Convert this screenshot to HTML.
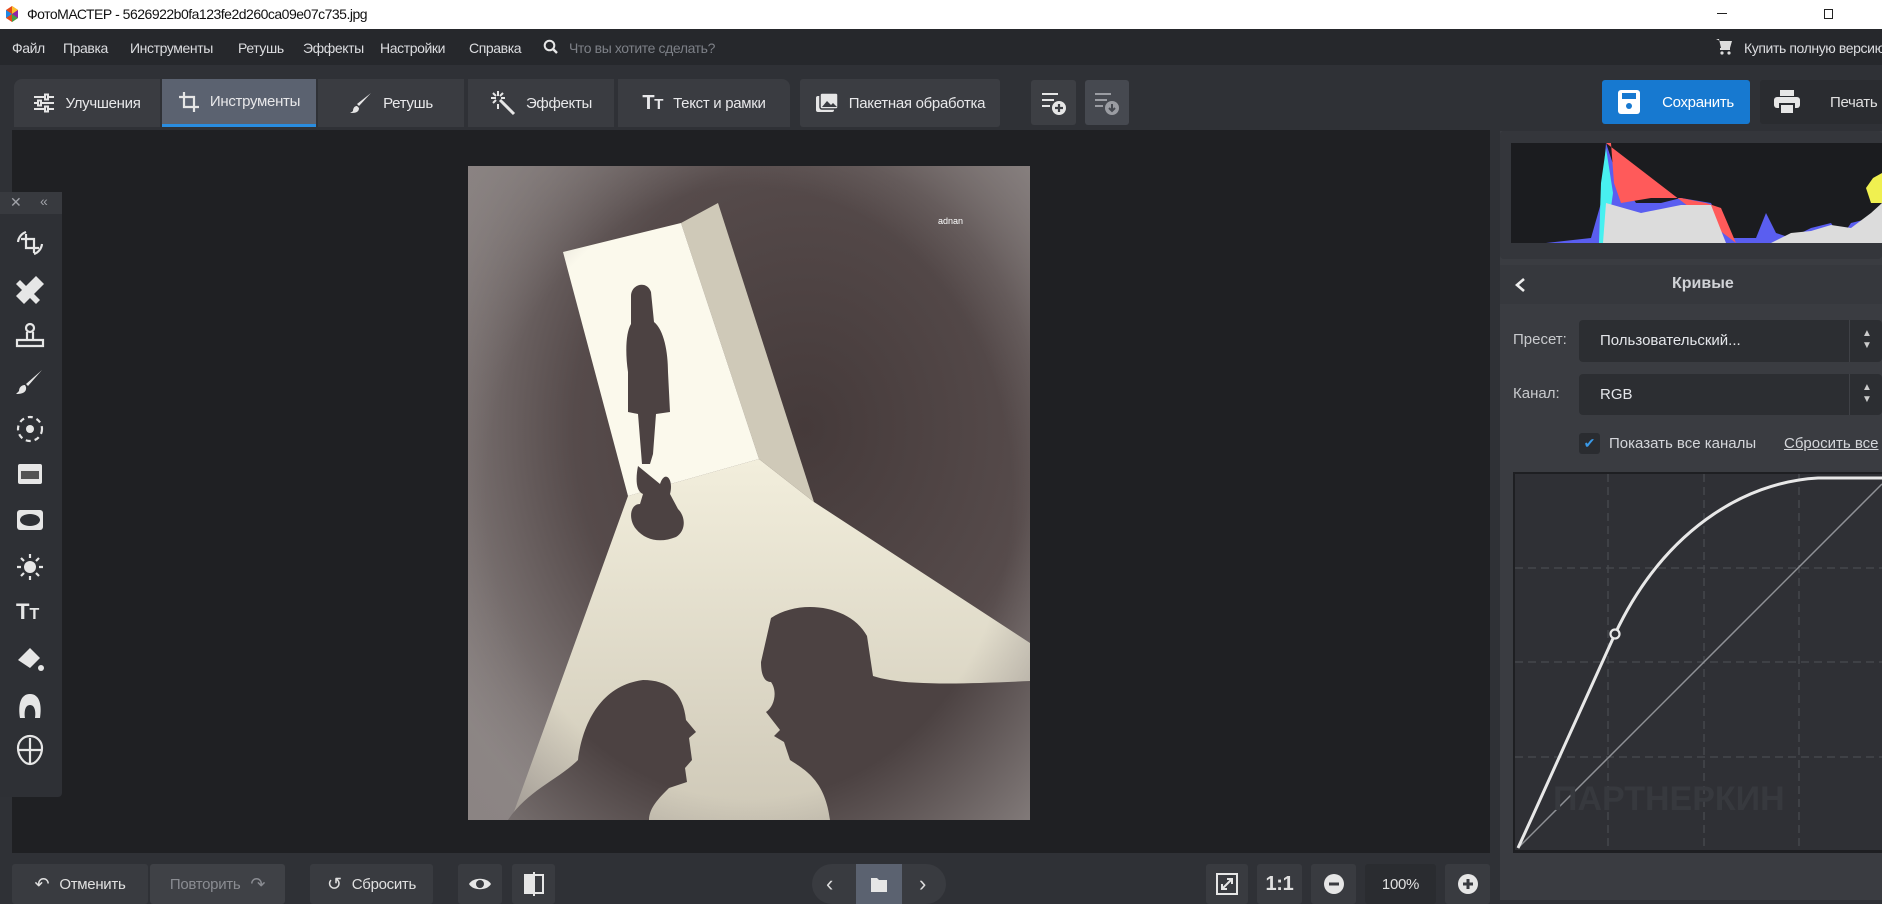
<!DOCTYPE html>
<html><head><meta charset="utf-8">
<style>
*{margin:0;padding:0;box-sizing:border-box;white-space:nowrap}
body{width:1882px;height:900px;overflow:hidden;background:#2f3136;font-family:"Liberation Sans","Noto Sans CJK SC",sans-serif;color:#e4e6ea;position:relative}
.a{position:absolute}
.title{left:0;top:0;width:1882px;height:29px;background:#fff;color:#111;font-size:14px}
.menu{left:0;top:29px;width:1882px;height:36px;background:#26282c;font-size:14px;color:#dcdde0;letter-spacing:-0.4px}
.menu span{position:absolute;top:11px}
.tab{position:absolute;top:79px;height:48px;background:#3a3c41;font-size:15px;color:#e8e8ea;display:flex;align-items:center;justify-content:center;gap:10px;letter-spacing:-0.3px}
.btn{position:absolute;background:#393b40;border-radius:3px;display:flex;align-items:center;justify-content:center;font-size:15px;color:#e0e0e0;gap:10px;letter-spacing:-0.3px}
</style></head><body>
<div class="a title">
 <svg class="a" style="left:4px;top:6px" width="16" height="16" viewBox="0 0 16 16"><path d="M8 0 L14 4 L14 12 L8 16 L2 12 L2 4Z" fill="#e64a19"/><path d="M8 0 L14 4 L8 8Z" fill="#fbc02d"/><path d="M14 12 L8 16 L8 8Z" fill="#43a047"/><path d="M2 12 L2 4 L8 8Z" fill="#1e88e5"/><path d="M14 4 L14 12 L8 8Z" fill="#8e24aa"/></svg>
 <span class="a" style="left:27px;top:6px;letter-spacing:-0.5px">ФотоМАСТЕР - 5626922b0fa123fe2d260ca09e07c735.jpg</span>
 <span class="a" style="left:1717px;top:13px;width:10px;height:1px;background:#222"></span>
 <span class="a" style="left:1824px;top:9px;width:9px;height:10px;border:1px solid #222"></span>
</div>
<div class="a menu">
 <span style="left:12px">Файл</span><span style="left:63px">Правка</span><span style="left:130px">Инструменты</span><span style="left:238px">Ретушь</span><span style="left:303px">Эффекты</span><span style="left:380px">Настройки</span><span style="left:469px">Справка</span>
 <svg class="a" style="left:543px;top:10px" width="16" height="16" viewBox="0 0 16 16"><circle cx="6.5" cy="6.5" r="4.8" stroke="#e6e6e6" stroke-width="2" fill="none"/><path d="M10 10 L14 14" stroke="#e6e6e6" stroke-width="2.4"/></svg>
 <span style="left:569px;color:#7d8087">Что вы хотите сделать?</span>
 <svg class="a" style="left:1714px;top:7px" width="20" height="20" viewBox="0 0 20 20"><path d="M2 3h3l2 9h9l2-7H6" fill="#ddd"/><rect x="6" y="12" width="10" height="2" fill="#ddd"/><circle cx="8" cy="17" r="1.6" fill="#ddd"/><circle cx="15" cy="17" r="1.6" fill="#ddd"/></svg>
 <span style="left:1744px">Купить полную версию</span>
</div>
<div class="tab" style="left:14px;width:146px;border-radius:8px 0 0 0"><svg width="22" height="20" viewBox="0 0 22 20"><g stroke="#e6e6e6" stroke-width="2"><path d="M1 4h20M1 10h20M1 16h20"/></g><g fill="#3a3c41" stroke="#e6e6e6" stroke-width="2"><rect x="12" y="1.5" width="3" height="5"/><rect x="5" y="7.5" width="3" height="5"/><rect x="12" y="13.5" width="3" height="5"/></g></svg>Улучшения</div>
<div class="tab" style="left:162px;width:154px;background:#5b6270;border-bottom:3px solid #2a8de0"><svg width="22" height="22" viewBox="0 0 22 22"><path d="M6 1v15h15M1 6h15v15" stroke="#e6e6e6" stroke-width="2.2" fill="none"/></svg>Инструменты</div>
<div class="tab" style="left:318px;width:146px"><svg width="24" height="24" viewBox="0 0 24 24"><path d="M22 2 L10 15 L8 13Z" fill="#e6e6e6"/><path d="M8 15c-3 0-4 3-4 5-1 1-3 2-3 2 4 0 9 0 9-5Z" fill="#e6e6e6"/></svg>Ретушь</div>
<div class="tab" style="left:468px;width:146px"><svg width="26" height="26" viewBox="0 0 26 26"><path d="M10 10 L24 24" stroke="#e6e6e6" stroke-width="3"/><g stroke="#e6e6e6" stroke-width="2"><path d="M8 1v5M8 14v5M1 8h5M11 8h4M3 3l3 3M13 3l-3 3M3 13l3-3"/></g></svg>Эффекты</div>
<div class="tab" style="left:618px;width:172px;border-radius:0 8px 0 0"><span style="font-weight:bold;font-size:20px">T<span style="font-size:15px">T</span></span>Текст и рамки</div>
<div class="tab" style="left:800px;width:200px;border-radius:3px;background:#3b3d42"><svg width="24" height="22" viewBox="0 0 24 22"><rect x="1" y="4" width="18" height="16" rx="2" fill="#e6e6e6"/><rect x="5" y="1" width="18" height="16" rx="2" fill="#e6e6e6" stroke="#3b3d42" stroke-width="1.5"/><path d="M7 15l5-6 4 4 2-2 4 4Z" fill="#3b3d42"/></svg>Пакетная обработка</div>
<div class="btn" style="left:1031px;top:80px;width:45px;height:45px;background:#3d3f44"><svg width="28" height="28" viewBox="0 0 28 28"><g stroke="#e6e6e6" stroke-width="2"><path d="M2 5h16M2 11h12M2 17h8"/></g><circle cx="19" cy="19" r="7" fill="#e6e6e6"/><path d="M19 15v8M15 19h8" stroke="#3d3f44" stroke-width="2.2"/></svg></div>
<div class="btn" style="left:1085px;top:80px;width:44px;height:45px;background:#464950"><svg width="28" height="28" viewBox="0 0 28 28"><g stroke="#9a9ca2" stroke-width="2"><path d="M2 5h16M2 11h12M2 17h8"/></g><circle cx="19" cy="19" r="7" fill="#9a9ca2"/><path d="M19 15v7M16 19l3 3 3-3" stroke="#464950" stroke-width="2" fill="none"/></svg></div>
<div class="btn" style="left:1602px;top:80px;width:148px;height:44px;background:#1779d0;color:#fff;gap:22px"><svg width="22" height="24" viewBox="0 0 22 24"><rect x="0" y="0" width="22" height="24" rx="3" fill="#fff"/><rect x="4" y="3" width="14" height="6" fill="#1779d0"/><circle cx="11" cy="16" r="3" fill="#1779d0"/></svg>Сохранить</div>
<div class="btn" style="left:1760px;top:80px;width:130px;height:44px;background:#2a2c30;gap:30px;justify-content:flex-start;padding-left:14px"><svg width="26" height="24" viewBox="0 0 26 24"><rect x="6" y="0" width="14" height="6" fill="#e6e6e6"/><rect x="0" y="7" width="26" height="11" rx="3" fill="#e6e6e6"/><rect x="6" y="14" width="14" height="10" fill="#e6e6e6" stroke="#2a2c30" stroke-width="2"/></svg>Печать</div>
<div class="a" style="left:12px;top:130px;width:1478px;height:723px;background:#1f2023"></div>
<svg class="a" style="left:468px;top:166px" width="562" height="654" viewBox="0 0 562 654">
 <defs>
  <radialGradient id="wall" cx="0.6" cy="0.4" r="0.75"><stop offset="0" stop-color="#453a3a"/><stop offset="0.55" stop-color="#564b4b"/><stop offset="1" stop-color="#8f8887"/></radialGradient>
  <linearGradient id="floor" x1="0" y1="0" x2="0" y2="1"><stop offset="0" stop-color="#f2eedc"/><stop offset="1" stop-color="#cfc9b8"/></linearGradient>
  <radialGradient id="vig" cx="0.5" cy="0.5" r="0.72"><stop offset="0.65" stop-color="#8a8382" stop-opacity="0"/><stop offset="1" stop-color="#8a8382" stop-opacity="0.9"/></radialGradient>
 </defs>
 <rect width="562" height="654" fill="url(#wall)"/>
 <path d="M160 330 L291 293 L346 336 L562 477 L562 654 L43 654Z" fill="url(#floor)"/>
 <path d="M213 57 L250 37 L346 336 L291 293Z" fill="#cfc9b8"/>
 <path d="M95 86 L213 57 L291 293 L160 330Z" fill="#fbf9ec"/>
 <g fill="#4c4242">
  <path d="M163 130 c0-12 16-16 20-4 l3 30 c10 8 14 30 14 50 l2 40 -14 2 -3 40 -3 10 -8 0 -4-50 -10-2 0-40 c-3-20 -2-40 3-48Z"/>
  <path d="M170 300 c-2 10 -3 25 5 28 l-3 10 c-10 0 -12 15 -4 25 c10 12 25 14 40 8 c10-6 10-20 2-28 l-8 -15 c4-15 -5-25 -10-10 Z"/>
  <path d="M40 654 c20-30 50-40 70-60 c5-40 25-75 65-80 c25 0 40 12 43 40 l10 12 -7 6 3 22 -7 8 2 14 -18 6 c-10 10 -20 20 -20 32Z"/>
  <path d="M303 452 c30-20 80-12 96 18 l6 40 c30 10 90 8 157 5 l0 139 -200 0 c-5-40 -25-50 -40-60 l-6-18 -10-6 6-6 -14-18 c8-5 12-20 5-30 -8 0 -10-10 -10-20Z"/>
 </g>
 <rect width="562" height="654" fill="url(#vig)"/>
 <text x="470" y="58" font-size="9" fill="#fff" font-family="Liberation Sans">adnan</text>
</svg>
<div class="a" style="left:0;top:192px;width:62px;height:605px;background:#2e3035;border-radius:0 4px 4px 0"></div>
<div class="a" style="left:0;top:192px;width:62px;height:22px;background:#383a3f;color:#a0a2a8;font-size:14px"><span class="a" style="left:10px;top:2px">✕</span><span class="a" style="left:40px;top:1px">«</span></div>
<svg class="a" style="left:14px;top:230px" width="34" height="550" viewBox="0 0 34 550" fill="#e6e6e6" stroke="#e6e6e6">
 <g fill="none" stroke-width="2.2"><path d="M12 4v14h13M7 9h13v14"/><path d="M4 12a12 12 0 0 1 8-10M28 14a12 12 0 0 1-8 10"/></g>
 <g transform="translate(0,46)" stroke="none"><path d="M6 4 L26 24 L22 28 L2 8Z"/><path d="M22 0 L30 8 L10 28 L2 20Z"/></g>
 <g transform="translate(0,92)" fill="none" stroke-width="2.2"><circle cx="16" cy="6" r="4"/><path d="M13 10v8M19 10v8M3 18h26v6H3Z"/></g>
 <g transform="translate(0,138)" stroke="none"><path d="M28 2 L14 18 L12 16Z"/><path d="M11 17c-4 0-6 3-6 6-2 2-3 3-3 3 5 0 11-1 10-7Z"/></g>
 <g transform="translate(0,184)" fill="none" stroke-width="2.2" stroke-dasharray="5 4"><circle cx="16" cy="15" r="12"/></g><circle cx="16" cy="199" r="4" stroke="none"/>
 <g transform="translate(0,230)"><rect x="4" y="4" width="24" height="20" rx="2" stroke="none"/><rect x="7" y="11" width="18" height="8" fill="#555" stroke="none"/></g>
 <g transform="translate(0,276)"><rect x="3" y="4" width="26" height="20" rx="3" stroke="none"/><ellipse cx="16" cy="14" rx="10" ry="6" fill="#2e3035" stroke="none"/></g>
 <g transform="translate(0,322)" stroke-width="2.2"><circle cx="16" cy="15" r="6" stroke="none"/><path d="M16 2v4M16 24v4M3 15h4M25 15h4M7 6l3 3M25 6l-3 3M7 24l3-3M25 24l-3-3"/></g>
 <text x="2" y="389" font-size="22" font-weight="bold" stroke="none" font-family="Liberation Sans">T<tspan font-size="16">T</tspan></text>
 <g transform="translate(0,414)" stroke="none"><path d="M4 16 L16 4 L26 14 L16 24Z"/><path d="M10 2 L16 6" stroke-width="2"/><circle cx="27" cy="24" r="3"/></g>
 <g transform="translate(0,460)" stroke="none"><path d="M6 28c-2-12 0-24 10-24s12 12 10 24h-5c1-6 0-13-5-13s-6 7-5 13Z"/></g>
 <g transform="translate(0,506)" fill="none" stroke-width="2.2"><path d="M4 12a12 12 0 0 1 24 0c0 8-6 16-12 16S4 20 4 12ZM16 2v26M4 14h24"/></g>
</svg>
<div class="a" style="left:1500px;top:131px;width:382px;height:769px;background:#3a3c41"></div>
<div class="a" style="left:1500px;top:131px;width:382px;height:128px;background:#34363b;border-radius:4px"></div>
<svg class="a" style="left:1511px;top:143px" width="371" height="100" viewBox="0 0 371 100">
 <rect width="371" height="100" fill="#1b1c1f"/>
 <path d="M35 100 L80 95 L90 60 L95 0 L105 30 L125 60 L150 60 L170 55 L200 60 L205 70 L220 95 L245 95 L255 70 L265 90 L280 95 L300 85 L320 80 L330 95 L340 80 L360 75 L371 70 L371 100Z" fill="#5a5ef0"/>
 <path d="M95 0 L100 0 L103 40 L110 60 L140 55 L170 55 L195 60 L210 65 L225 100Z" fill="#ff5a5a"/>
 <path d="M88 100 L90 40 L95 5 L102 50 L95 100Z" fill="#48f0f0"/>
 <path d="M92 100 L95 60 L130 70 L170 62 L200 62 L215 100 L260 100 L280 90 L300 88 L320 82 L340 85 L360 70 L371 60 L371 100Z" fill="#dcdcdc"/>
 <path d="M355 45 L362 35 L371 30 L371 60 L360 60Z" fill="#f0f050"/>
</svg>
<div class="a" style="left:1500px;top:265px;width:382px;height:39px;background:#36383d;font-weight:bold;font-size:16px;color:#d0d2d6"><span class="a" style="left:172px;top:10px">Кривые</span>
 <svg class="a" style="left:14px;top:12px" width="12" height="16" viewBox="0 0 12 16"><path d="M10 2 L3 8 L10 14" stroke="#eee" stroke-width="2.6" fill="none"/></svg></div>
<div class="a" style="left:1513px;top:331px;font-size:15px;color:#c8cacd">Пресет:</div>
<div class="a" style="left:1579px;top:320px;width:303px;height:42px;background:#2c2e32;border-radius:4px;font-size:15px"><span class="a" style="left:21px;top:12px">Пользовательский...</span><span class="a" style="left:270px;top:0;width:1px;height:42px;background:#3f4146"></span><span class="a" style="left:283px;top:8px;font-size:10px;line-height:12px;color:#ccc">▲<br>▼</span></div>
<div class="a" style="left:1513px;top:385px;font-size:15px;color:#c8cacd">Канал:</div>
<div class="a" style="left:1579px;top:374px;width:303px;height:41px;background:#2c2e32;border-radius:4px;font-size:15px"><span class="a" style="left:21px;top:12px">RGB</span><span class="a" style="left:270px;top:0;width:1px;height:41px;background:#3f4146"></span><span class="a" style="left:283px;top:8px;font-size:10px;line-height:12px;color:#ccc">▲<br>▼</span></div>
<div class="a" style="left:1579px;top:433px;width:21px;height:21px;background:#2a2c30;border-radius:3px;color:#3a9ae8;font-size:14px;text-align:center;line-height:21px">✔</div>
<div class="a" style="left:1609px;top:435px;font-size:15px;color:#d4d6da">Показать все каналы</div>
<div class="a" style="left:1784px;top:435px;font-size:15px;color:#d4d6da;text-decoration:underline">Сбросить все</div>
<svg class="a" style="left:1513px;top:472px" width="369" height="381" viewBox="0 0 369 381">
 <rect x="0" y="0" width="380" height="381" fill="#1e1f22"/>
 <rect x="2" y="2" width="380" height="376" fill="#2f3035"/>
 <g stroke="#45474c" stroke-width="1.5" stroke-dasharray="8 5"><path d="M95 2v376M191 2v376M286 2v376M2 96h380M2 190h380M2 285h380"/></g>
 <path d="M5 376 L369 12" stroke="#8f9196" stroke-width="1.5"/>
 <path d="M5 376 C40 300 75 220 102 162 C150 60 230 10 305 6 L369 6" stroke="#e8e8e8" stroke-width="3" fill="none"/>
 <circle cx="102" cy="162" r="4.5" fill="#2f3035" stroke="#e8e8e8" stroke-width="2.2"/>
 <text x="40" y="338" font-size="34" font-weight="bold" fill="#37393e" font-family="Liberation Sans">ПАРТНЕРКИН</text>
</svg>
<div class="btn" style="left:12px;top:864px;width:136px;height:40px"><span style="font-size:18px">↶</span>Отменить</div>
<div class="btn" style="left:150px;top:864px;width:135px;height:40px;background:#3f4146;color:#8a8c92">Повторить <span style="font-size:18px">↷</span></div>
<div class="btn" style="left:310px;top:864px;width:123px;height:40px"><span style="font-size:18px">↺</span>Сбросить</div>
<div class="btn" style="left:458px;top:864px;width:44px;height:40px"><svg width="24" height="16" viewBox="0 0 24 16"><path d="M1 8C5 1 19 1 23 8C19 15 5 15 1 8Z" fill="#e6e6e6"/><circle cx="12" cy="8" r="4" fill="#393b40"/></svg></div>
<div class="btn" style="left:512px;top:864px;width:43px;height:40px"><svg width="20" height="24" viewBox="0 0 20 24"><rect x="1" y="3" width="18" height="18" fill="none" stroke="#e6e6e6" stroke-width="2"/><rect x="1" y="3" width="9" height="18" fill="#e6e6e6"/><path d="M10 0v24" stroke="#e6e6e6" stroke-width="2"/></svg></div>
<div class="btn" style="left:812px;top:864px;width:134px;height:40px;border-radius:20px"></div>
<div class="btn" style="left:856px;top:864px;width:46px;height:40px;background:#5b6270;border-radius:0"><svg width="18" height="16" viewBox="0 0 18 16"><path d="M1 2h6l2 2h8v12H1Z" fill="#e6e6e6"/></svg></div>
<span class="a" style="left:826px;top:871px;font-size:22px;color:#ddd">‹</span><span class="a" style="left:919px;top:871px;font-size:22px;color:#ddd">›</span>
<div class="btn" style="left:1206px;top:864px;width:42px;height:40px"><svg width="22" height="22" viewBox="0 0 22 22"><rect x="1" y="1" width="20" height="20" fill="none" stroke="#e6e6e6" stroke-width="2"/><path d="M6 16L16 6M11 6h5v5M6 11v5h5" stroke="#e6e6e6" stroke-width="2" fill="none"/></svg></div>
<div class="btn" style="left:1257px;top:864px;width:45px;height:40px;font-size:20px;font-weight:bold">1:1</div>
<div class="btn" style="left:1311px;top:864px;width:45px;height:40px"><svg width="22" height="22"><circle cx="11" cy="11" r="10" fill="#e6e6e6"/><path d="M6 11h10" stroke="#393b40" stroke-width="3"/></svg></div>
<div class="btn" style="left:1365px;top:864px;width:71px;height:40px;background:#2a2c30;font-size:15px">100%</div>
<div class="btn" style="left:1445px;top:864px;width:45px;height:40px"><svg width="22" height="22"><circle cx="11" cy="11" r="10" fill="#e6e6e6"/><path d="M6 11h10M11 6v10" stroke="#393b40" stroke-width="3"/></svg></div>
</body></html>
